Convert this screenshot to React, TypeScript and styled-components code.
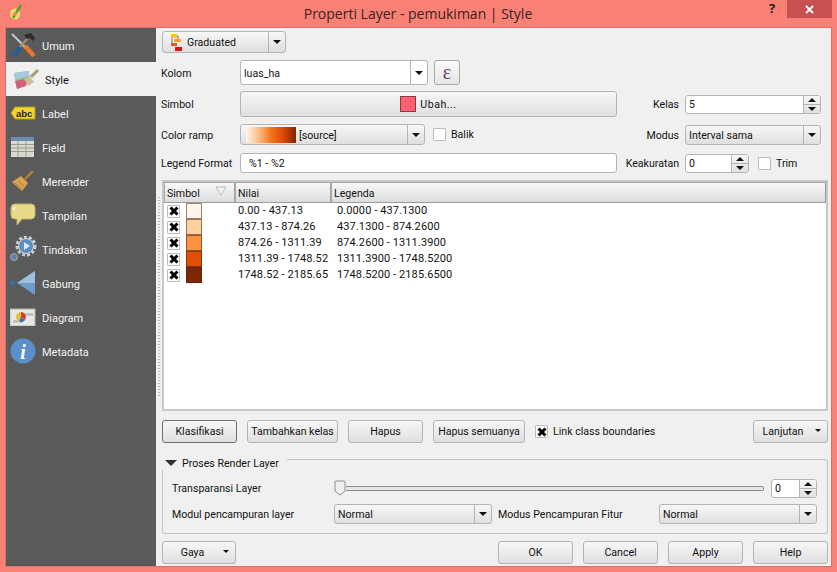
import React from 'react';
import styled, { createGlobalStyle } from 'styled-components';

const Global = createGlobalStyle`
  html, body { margin: 0; padding: 0; background: #fa8072; }
  body { font-family: Roboto, "Noto Sans", sans-serif; font-size: 10.6px; color: #111; }
`;

const Screen = styled.div`
  width: 837px; height: 572px; display: flex; flex-direction: column; background: #f98075; overflow: hidden;
`;
const TitleBar = styled.div`
  height: 27px; flex: none; position: relative; display: flex; align-items: center; justify-content: center;
  font-family: "Open Sans", "Noto Sans", sans-serif; font-size: 14px; color: #3a2322; padding: 0 1px 1px 0; box-sizing: border-box;
`;
const TitleLogo = styled.svg` position: absolute; left: 9px; top: 4px; `;
const HelpMark = styled.span` position: absolute; left: 769px; top: -1px; font-weight: 700; font-size: 13px; color: #222; `;
const CloseBox = styled.div`
  position: absolute; left: 787px; top: 0; width: 45px; height: 18px; background: #c75050;
  display: flex; align-items: center; justify-content: center;
`;
const Win = styled.div`
  flex: 1; margin: 0 5px 5px 5px; border: 1px solid #d96f66; background: #f0f0f0; display: flex; min-height: 0;
`;
const Side = styled.div` width: 150px; flex: none; background: #5a5a5a; display: flex; flex-direction: column; `;
const SideItem = styled.div<{ $on?: boolean }>`
  height: 34px; box-sizing: border-box; display: flex; align-items: center; gap: 3px;
  padding-left: ${p => (p.$on ? '4px' : '1px')}; font-size: 11px;
  background: ${p => (p.$on ? '#f0f0f0' : 'transparent')}; color: ${p => (p.$on ? '#111' : '#f4f4f4')};
`;
const SideLabel = styled.span` padding-top: 2px; `;
const SideIcon = styled.span` width: 32px; height: 28px; display: flex; align-items: center; justify-content: center; flex: none; `;
const Splitter = styled.div` width: 6px; flex: none; display: flex; align-items: center; justify-content: center; `;
const Dots = styled.div`
  width: 2px; height: 200px;
  background: repeating-linear-gradient(to bottom, #b9b9b9 0 1px, #f0f0f0 1px 3px);
`;
const Main = styled.div`
  flex: 1; display: flex; flex-direction: column; padding: 3px 3px 2px 0; min-width: 0;
`;
const Ctl = styled.div<{ $w?: number; $h?: number }>`
  ${p => (p.$w ? `width: ${p.$w}px;` : 'flex: 1;')} height: ${p => p.$h ?? 21}px; box-sizing: border-box; flex-shrink: 0;
  border: 1px solid #b4b4b4; border-radius: 3px; background: linear-gradient(#f7f7f7, #dfdfdf);
  display: flex; align-items: center;
`;
const CtlText = styled.span<{ $pl?: number; $gap?: number; $pt?: number }>`
  flex: 1; padding-left: ${p => p.$pl ?? 3}px; padding-top: ${p => p.$pt ?? 0}px; white-space: nowrap; overflow: hidden;
  display: flex; align-items: center; gap: ${p => p.$gap ?? 3}px;
`;
const Drop = styled.span`
  width: 16px; align-self: stretch; border-left: 1px solid #b4b4b4; display: flex; align-items: center; justify-content: center; flex: none;
  &::after { content: ""; border: 4px solid transparent; border-top: 4px solid #111; border-bottom: 0; }
`;
const InputBox = styled(Ctl)` background: #fff; border-radius: 3px; `;
const SpinCol = styled.span`
  width: 16px; align-self: stretch; border-left: 1px solid #b4b4b4; display: flex; flex-direction: column; flex: none;
  background: linear-gradient(#f7f7f7, #dfdfdf); border-radius: 0 2px 2px 0;
`;
const SpinUp = styled.span`
  flex: 1; display: flex; align-items: center; justify-content: center; border-bottom: 1px solid #b4b4b4;
  &::after { content: ""; border: 4px solid transparent; border-bottom: 4px solid #111; border-top: 0; }
`;
const SpinDown = styled.span`
  flex: 1; display: flex; align-items: center; justify-content: center;
  &::after { content: ""; border: 4px solid transparent; border-top: 4px solid #111; border-bottom: 0; }
`;
const FormRow = styled.div<{ $h: number; $mt: number }>`
  display: flex; align-items: center; height: ${p => p.$h}px; margin-top: ${p => p.$mt}px; flex: none;
`;
const FieldLabel = styled.span<{ $pt?: number }>`
  width: 78px; flex: none; white-space: nowrap; margin-left: -1px; padding: ${p => p.$pt ?? 0}px 1px 0 0;
`;
const Mid = styled.div` width: 377px; flex: none; display: flex; align-items: center; `;
const RightLabel = styled.span<{ $pt?: number }>`
  width: 62px; text-align: right; margin-right: 6px; padding-top: ${p => p.$pt ?? 0}px; white-space: nowrap; flex: none;
`;
const ExprBtn = styled(Ctl)`
  margin-left: 6px; justify-content: center; font-family: "Liberation Serif", serif; font-size: 20px; color: #6a3b78; border-color: #a8a8a8; background: linear-gradient(#fafafa,#e6e6e6);
`;
const Wide = styled.div`
  flex: 1; height: 26px; box-sizing: border-box; border: 1px solid #b4b4b4; border-radius: 3px; background: linear-gradient(#f6f6f6, #e0e0e0);
  display: flex; align-items: center; justify-content: center; gap: 4px;
`;
const SymbolChip = styled.span` width: 16px; height: 16px; background: #fb6072; border: 1px solid #8c3a44; box-sizing: border-box; `;
const WideText = styled.span` letter-spacing: .5px; `;
const Ramp = styled.span`
  width: 50px; height: 16px; flex: none; margin-left: 2px;
  background: linear-gradient(to right, #fff5eb, #fdbe85, #f5751a, #d94801, #7f2704);
`;
const Check = styled.span`
  width: 13px; height: 13px; box-sizing: border-box; flex: none; border: 1px solid #bcbcbc; border-radius: 1px; background: #fff;
  display: flex; align-items: center; justify-content: center;
`;
const CheckRow = styled.span<{ $ml: number }>` display: flex; align-items: center; gap: 5px; margin-left: ${p => p.$ml}px; white-space: nowrap; `;
const Tree = styled.div`
  margin-top: 7px; height: 231px; flex: none; box-sizing: border-box; border: 2px solid #c8c8c8; background: #fff; display: flex; flex-direction: column;
`;
const Head = styled.div`
  height: 21px; flex: none; display: grid; grid-template-columns: 72px 96px 1fr; border-bottom: 1px solid #9c9c9c; box-sizing: border-box; border-right: 1px solid #999;
`;
const HeadCell = styled.div`
  position: relative; display: flex; align-items: center; padding: 1px 0 0 2px; background: linear-gradient(#f8f8f8, #dcdcdc); border-right: 2px solid #a6a6a6; border-top: 1px solid #a6a6a6;
  &:first-child { border-left: 1px solid #a6a6a6; }
  &:last-child { border-right: 0; }
`;
const SortMark = styled.svg` position: absolute; right: 7px; top: 3px; `;
const Row = styled.div` height: 16px; display: grid; grid-template-columns: 74px 99px 1fr; align-items: center; `;
const SymbolCell = styled.div` display: flex; align-items: center; padding-left: 3px; gap: 6px; `;
const Swatch = styled.span<{ $c: string }>` width: 16px; height: 16px; box-sizing: border-box; background: ${p => p.$c}; border: 1px solid rgba(70, 35, 10, .55); `;
const RowText = styled.span` white-space: nowrap; font-size: 11px; letter-spacing: .1px; margin-bottom: 2px; `;
const Buttons = styled.div` display: flex; align-items: center; margin-top: 9px; height: 23px; flex: none; `;
const Btn = styled.div<{ $w: number; $ml?: number; $dark?: boolean; $pr?: number }>`
  width: ${p => p.$w}px; height: 23px; box-sizing: border-box; margin-left: ${p => p.$ml ?? 0}px; flex: none; position: relative;
  padding-right: ${p => p.$pr ?? 0}px;
  border: 1px solid ${p => (p.$dark ? '#6f6f6f' : '#b4b4b4')}; border-radius: 3px; background: linear-gradient(#f7f7f7, #dfdfdf);
  display: flex; align-items: center; justify-content: center; white-space: nowrap;
`;
const BtnArrow = styled.span`
  position: absolute; right: 6px; top: 8px; border: 3px solid transparent; border-top: 3px solid #111; border-bottom: 0;
`;
const GroupHead = styled.div` display: flex; align-items: center; height: 14px; margin-top: 13px; flex: none; `;
const Tri = styled.span` margin-left: 3px; border: 5px solid transparent; border-top: 6px solid #333; border-bottom: 0; border-left-width: 6px; border-right-width: 6px; `;
const GroupTitle = styled.span` margin: 0 8px 0 5px; white-space: nowrap; `;
const GroupLine = styled.span` flex: 1; height: 10px; align-self: flex-end; border-top: 1px solid #c2c2c2; border-right: 1px solid #c2c2c2; border-radius: 0 3px 0 0; `;
const GroupBody = styled.div`
  height: 64px; flex: none; box-sizing: border-box; border: 1px solid #c2c2c2; border-top: 0; border-radius: 0 0 3px 3px; padding: 8px 10px 0 9px;
  display: flex; flex-direction: column; gap: 6px;
`;
const GroupRow = styled.div` display: flex; align-items: center; height: 20px; `;
const GroupLabel = styled.span<{ $w: number; $pl?: number }>` width: ${p => p.$w}px; padding-left: ${p => p.$pl ?? 0}px; box-sizing: border-box; flex: none; white-space: nowrap; `;
const Slider = styled.div` flex: 1; height: 16px; display: flex; align-items: center; margin-right: 7px; `;
const Thumb = styled.svg` flex: none; `;
const Track = styled.span` flex: 1; height: 3px; border: 1px solid #8e8e8e; border-left: 0; border-radius: 0 2px 2px 0; background: #e6e6e6; `;
const Footer = styled.div` display: flex; align-items: center; margin-top: 7px; height: 23px; flex: none; `;
const Spacer = styled.span` flex: 1; `;

const CrossMark = () => (
  <svg width="10" height="10" viewBox="0 0 10 10"><path d="M1.500 1.500l7 7M8.500 1.500l-7 7" stroke="#000" strokeWidth="3" /></svg>
);

const Spin = () => (
  <SpinCol><SpinUp /><SpinDown /></SpinCol>
);

const UmumIcon = () => (
  <svg width="26" height="26" viewBox="0 0 26 26">
    <path d="M2 2l14 14" stroke="#c4c8cc" strokeWidth="2" />
    <path d="M15 14l9 10" stroke="#e8782a" strokeWidth="4.500" />
    <path d="M19 5L8 17" stroke="#a08a68" strokeWidth="2.400" />
    <path d="M10 15l-7 9" stroke="#2b5c93" strokeWidth="4.500" />
    <path d="M14 3l7-2 4 5-2 3-3-3-3 1z" fill="#2d2d2d" />
  </svg>
);
const StyleIcon = () => (
  <svg width="28" height="24" viewBox="0 0 28 24">
    <path d="M2 6l15-2 1 12-13 6z" fill="#7ec07a" />
    <path d="M2 6l15-2 0 5L3 13z" fill="#a8c8e0" />
    <path d="M3 14l12-2-1 7-9 3z" fill="#d8607e" />
    <path d="M12 12l5-3 5 6-6 4z" fill="#c8c09a" />
    <path d="M19 10l7-7" stroke="#a89c70" strokeWidth="3" />
  </svg>
);
const LabelIcon = () => (
  <svg width="26" height="14" viewBox="0 0 26 14">
    <path d="M5 1h20v12H5L1 7z" fill="#f2d32e" stroke="#b59a10" />
    <text x="6" y="10.500" fontFamily="Liberation Sans, sans-serif" fontSize="9.500" fontWeight="700" fill="#222">abc</text>
  </svg>
);
const FieldIcon = () => (
  <svg width="24" height="20" viewBox="0 0 24 20">
    <rect width="23" height="20" fill="#d9dbce" />
    <rect width="23" height="4" fill="#6e8cb3" />
    <path d="M0 7.500h23M0 11h23M0 14.500h23M7 4v16M15 4v16" stroke="#9b9d90" />
  </svg>
);
const BrushIcon = () => (
  <svg width="24" height="24" viewBox="0 0 24 24">
    <path d="M14 10l8-8" stroke="#b5803c" strokeWidth="2.400" />
    <path d="M10 7l7 7-6 8-10-9z" fill="#dba65a" stroke="#a87c3c" />
    <path d="M4 14l7 6M7 12l6 5" stroke="#a87c3c" />
  </svg>
);
const BubbleIcon = () => (
  <svg width="26" height="24" viewBox="0 0 26 24">
    <path d="M5 1h16q4 0 4 4v7q0 4-4 4H12l-5 6 0-6H5q-4 0-4-4V5q0-4 4-4z" fill="#e6d98a" stroke="#c4b464" />
    <path d="M5 4q-1 0-1 3" stroke="#fff" strokeWidth="1.500" fill="none" />
  </svg>
);
const GearIcon = () => (
  <svg width="28" height="26" viewBox="0 0 28 26">
    <circle cx="17" cy="10" r="9" fill="none" stroke="#ccc" strokeWidth="3" strokeDasharray="3 2" />
    <circle cx="17" cy="10" r="7.500" fill="#5a8fc8" stroke="#d8d8d8" />
    <path d="M15 6v8l6-4z" fill="#dfeaf6" />
    <circle cx="5" cy="21" r="3.500" fill="#5a80b0" stroke="#aaa" />
  </svg>
);
const JoinIcon = () => (
  <svg width="28" height="26" viewBox="0 0 28 26">
    <path d="M8 13L26 1v24z" fill="#6e9ccc" />
    <path d="M8 13L26 1v12z" fill="#9cc0e0" />
    <circle cx="3.500" cy="13" r="2.500" fill="#3e6ea4" />
  </svg>
);
const DiagramIcon = () => (
  <svg width="26" height="18" viewBox="0 0 26 18">
    <rect width="25" height="17" y="1" fill="#e8e8e2" stroke="#b4b4b0" />
    <path d="M14 5h9v3h-6zM3 12h5v3H3z" fill="#bfc2bc" />
    <circle cx="11" cy="9" r="5" fill="#e0c040" />
    <path d="M11 9V4a5 5 0 0 1 4 8z" fill="#d04040" />
    <path d="M11 9l4 3a5 5 0 0 1-6 2z" fill="#4a70b0" />
  </svg>
);
const InfoIcon = () => (
  <svg width="26" height="26" viewBox="0 0 26 26">
    <circle cx="13" cy="13" r="12.500" fill="#5b8fcc" />
    <text x="13" y="21" textAnchor="middle" fontFamily="Liberation Serif, serif" fontStyle="italic" fontWeight="700" fontSize="20" fill="#fff">i</text>
  </svg>
);
const GraduatedIcon = () => (
  <svg width="11" height="17" viewBox="0 0 11 17">
    <rect x="0" y="0" width="6" height="4" fill="#f2c81e" />
    <rect x="3" y="5" width="7" height="3" fill="#f2a020" />
    <rect x="0" y="9" width="6" height="3" fill="#e65a20" />
    <rect x="4" y="13" width="7" height="4" fill="#e01010" />
    <path d="M1 4v7M6 2h1v3" stroke="#777" fill="none" />
  </svg>
);

const sideItems: { label: string; icon: React.ReactNode; on?: boolean }[] = [
  { label: 'Umum', icon: <UmumIcon /> },
  { label: 'Style', icon: <StyleIcon />, on: true },
  { label: 'Label', icon: <LabelIcon /> },
  { label: 'Field', icon: <FieldIcon /> },
  { label: 'Merender', icon: <BrushIcon /> },
  { label: 'Tampilan', icon: <BubbleIcon /> },
  { label: 'Tindakan', icon: <GearIcon /> },
  { label: 'Gabung', icon: <JoinIcon /> },
  { label: 'Diagram', icon: <DiagramIcon /> },
  { label: 'Metadata', icon: <InfoIcon /> },
];

const classes = [
  { c: '#fff5eb', nilai: '0.00 - 437.13', legenda: '0.0000 - 437.1300' },
  { c: '#fdd0a2', nilai: '437.13 - 874.26', legenda: '437.1300 - 874.2600' },
  { c: '#fd9243', nilai: '874.26 - 1311.39', legenda: '874.2600 - 1311.3900' },
  { c: '#df4f05', nilai: '1311.39 - 1748.52', legenda: '1311.3900 - 1748.5200' },
  { c: '#7f2704', nilai: '1748.52 - 2185.65', legenda: '1748.5200 - 2185.6500' },
];

export default function App() {
  return (
    <Screen>
      <Global />
      <TitleBar>
        <TitleLogo width="14" height="16" viewBox="0 0 14 16">
          <ellipse cx="6" cy="10" rx="5" ry="5.500" fill="#e8e26a" />
          <path d="M4 14L12 1" stroke="#5aa02c" strokeWidth="2.500" />
          <circle cx="6" cy="10" r="2" fill="#f98075" />
        </TitleLogo>
        Properti Layer - pemukiman | Style
        <HelpMark>?</HelpMark>
        <CloseBox>
          <svg width="9" height="9" viewBox="0 0 9 9"><path d="M1 1l7 7M8 1L1 8" stroke="#fff" strokeWidth="1.800" /></svg>
        </CloseBox>
      </TitleBar>
      <Win>
        <Side>
          {sideItems.map(it => (
            <SideItem key={it.label} $on={it.on}>
              <SideIcon>{it.icon}</SideIcon>
              <SideLabel>{it.label}</SideLabel>
            </SideItem>
          ))}
        </Side>
        <Splitter><Dots /></Splitter>
        <Main>
          <FormRow $h={22} $mt={0}>
            <Ctl $w={124} $h={22}>
              <CtlText $pl={8} $gap={5}><GraduatedIcon />Graduated</CtlText>
              <Drop />
            </Ctl>
          </FormRow>
          <FormRow $h={25} $mt={7}>
            <FieldLabel $pt={1}>Kolom</FieldLabel>
            <InputBox $w={188} $h={25}>
              <CtlText $pt={1}>luas_ha</CtlText>
              <Drop />
            </InputBox>
            <ExprBtn $w={26} $h={25}>ε</ExprBtn>
          </FormRow>
          <FormRow $h={26} $mt={6}>
            <FieldLabel>Simbol</FieldLabel>
            <Mid><Wide><SymbolChip /><WideText>Ubah...</WideText></Wide></Mid>
            <RightLabel>Kelas</RightLabel>
            <InputBox $w={136} $h={19}>
              <CtlText>5</CtlText>
              <Spin />
            </InputBox>
          </FormRow>
          <FormRow $h={21} $mt={7}>
            <FieldLabel $pt={1}>Color ramp</FieldLabel>
            <Mid>
              <Ctl $w={185}>
                <CtlText $pt={1}><Ramp />[source]</CtlText>
                <Drop />
              </Ctl>
              <CheckRow $ml={8}><Check />Balik</CheckRow>
            </Mid>
            <RightLabel $pt={1}>Modus</RightLabel>
            <Ctl $w={136} $h={20}>
              <CtlText $pt={1}>Interval sama</CtlText>
              <Drop />
            </Ctl>
          </FormRow>
          <FormRow $h={20} $mt={8}>
            <FieldLabel>Legend Format</FieldLabel>
            <Mid>
              <InputBox $w={377} $h={20}><CtlText $pl={8}>%1 - %2</CtlText></InputBox>
            </Mid>
            <RightLabel>Keakuratan</RightLabel>
            <InputBox $w={64} $h={19}>
              <CtlText>0</CtlText>
              <Spin />
            </InputBox>
            <CheckRow $ml={9}><Check />Trim</CheckRow>
          </FormRow>
          <Tree>
            <Head>
              <HeadCell>
                Simbol
                <SortMark width="12" height="10" viewBox="0 0 12 10"><path d="M1 1h10L6 9z" fill="#f4f4f4" stroke="#b8b8b8" /></SortMark>
              </HeadCell>
              <HeadCell>Nilai</HeadCell>
              <HeadCell>Legenda</HeadCell>
            </Head>
            {classes.map(k => (
              <Row key={k.nilai}>
                <SymbolCell>
                  <Check><CrossMark /></Check>
                  <Swatch $c={k.c} />
                </SymbolCell>
                <RowText>{k.nilai}</RowText>
                <RowText>{k.legenda}</RowText>
              </Row>
            ))}
          </Tree>
          <Buttons>
            <Btn $w={75} $dark>Klasifikasi</Btn>
            <Btn $w={91} $ml={10}>Tambahkan kelas</Btn>
            <Btn $w={75} $ml={10}>Hapus</Btn>
            <Btn $w={92} $ml={10}>Hapus semuanya</Btn>
            <CheckRow $ml={10}><Check><CrossMark /></Check>Link class boundaries</CheckRow>
            <Spacer />
            <Btn $w={75} $pr={15}>Lanjutan<BtnArrow /></Btn>
          </Buttons>
          <GroupHead>
            <Tri />
            <GroupTitle>Proses Render Layer</GroupTitle>
            <GroupLine />
          </GroupHead>
          <GroupBody>
            <GroupRow>
              <GroupLabel $w={162}>Transparansi Layer</GroupLabel>
              <Slider>
                <Thumb width="12" height="16" viewBox="0 0 12 16"><path d="M1.500 1h9l.5 1v9l-5 4-5-4V2z" fill="#f0f0f0" stroke="#8e8e8e" /></Thumb>
                <Track />
              </Slider>
              <InputBox $w={46} $h={19}>
                <CtlText>0</CtlText>
                <Spin />
              </InputBox>
            </GroupRow>
            <GroupRow>
              <GroupLabel $w={162}>Modul pencampuran layer</GroupLabel>
              <Ctl $w={158} $h={20}><CtlText>Normal</CtlText><Drop /></Ctl>
              <GroupLabel $w={167} $pl={6}>Modus Pencampuran Fitur</GroupLabel>
              <Ctl $w={158} $h={20}><CtlText>Normal</CtlText><Drop /></Ctl>
            </GroupRow>
          </GroupBody>
          <Footer>
            <Btn $w={74} $pr={13}>Gaya<BtnArrow /></Btn>
            <Spacer />
            <Btn $w={75}>OK</Btn>
            <Btn $w={75} $ml={10}>Cancel</Btn>
            <Btn $w={75} $ml={10}>Apply</Btn>
            <Btn $w={75} $ml={10}>Help</Btn>
          </Footer>
        </Main>
      </Win>
    </Screen>
  );
}
